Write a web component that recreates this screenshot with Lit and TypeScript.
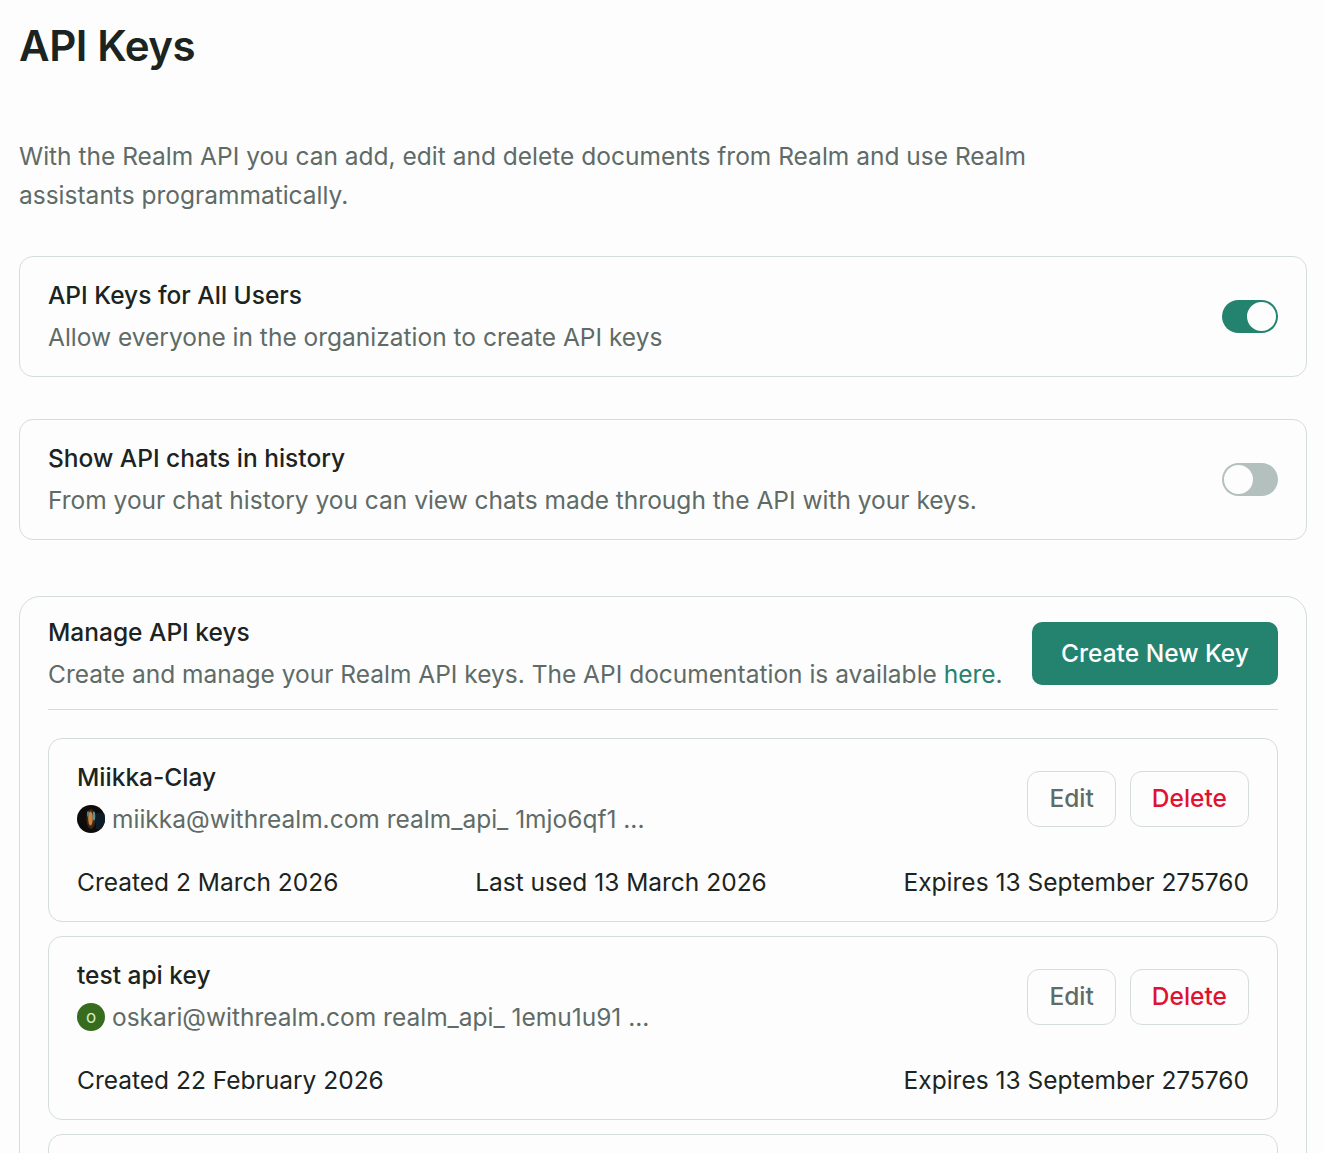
import { LitElement, html, css } from "lit";
import { customElement } from "lit/decorators.js";

interface ApiKey {
  name: string;
  email: string;
  token: string;
  avatar: "photo" | "letter";
  dates: string[];
}

const KEYS: ApiKey[] = [
  {
    name: "Miikka-Clay",
    email: "miikka@withrealm.com",
    token: "realm_api_ 1mjo6qf1 ...",
    avatar: "photo",
    dates: ["Created 2 March 2026", "Last used 13 March 2026", "Expires 13 September 275760"],
  },
  {
    name: "test api key",
    email: "oskari@withrealm.com",
    token: "realm_api_ 1emu1u91 ...",
    avatar: "letter",
    dates: ["Created 22 February 2026", "Expires 13 September 275760"],
  },
];

@customElement("app-root")
export class AppRoot extends LitElement {
  static styles = css`
    :host {
      display: block;
      box-sizing: border-box;
      height: 1153px;
      overflow: hidden;
      padding: 0 17px 0 19px;
      background: #fdfdfd;
      font-family: Inter, "Liberation Sans", sans-serif;
      font-size: 24.5px;
      line-height: 42px;
      color: #1b2421;
    }
    * { box-sizing: border-box; }
    h1 {
      margin: 0;
      padding-top: 21px;
      font-size: 42px;
      line-height: 50px;
      font-weight: 600;
      letter-spacing: -0.42px;
      color: #1b2421;
    }
    .intro {
      margin: 66px 0 0;
      max-width: 1050px;
      line-height: 39px;
      color: #5f6b67;
    }
    .card {
      border: 1px solid #d5dcdc;
      border-radius: 14px;
    }
    .setting {
      display: flex;
      align-items: center;
      justify-content: space-between;
      padding: 17px 28px 18px;
    }
    .first { margin-top: 41px; }
    .second { margin-top: 42px; }
    .title { font-weight: 500; color: #1b2421; }
    .muted { color: #5f6b67; }
    .switch {
      flex: none;
      display: flex;
      width: 56px;
      height: 33px;
      margin-top: 1px;
      padding: 2px;
      border-radius: 17px;
      background: #b4c0bd;
    }
    .switch.on {
      background: #24836f;
      justify-content: flex-end;
    }
    .knob {
      width: 29px;
      height: 29px;
      border-radius: 50%;
      background: #fdfdfd;
    }
    .manage {
      margin-top: 56px;
      padding: 14px 28px 0;
      border-radius: 21px;
    }
    .head {
      display: flex;
      align-items: center;
      justify-content: space-between;
      padding-bottom: 14px;
      border-bottom: 1px solid #d5dcdc;
      margin-bottom: 28px;
    }
    .link { color: #24836f; }
    .create {
      flex: none;
      width: 246px;
      height: 63px;
      border: none;
      border-radius: 10px;
      background: #24836f;
      color: #fdfdfd;
      font: 500 24.5px/42px Inter, "Liberation Sans", sans-serif;
    }
    .key {
      padding: 17px 28px 18px;
      margin-bottom: 14px;
    }
    .placeholder { height: 184px; }
    .key-top {
      display: flex;
      align-items: center;
      justify-content: space-between;
    }
    .owner {
      display: flex;
      align-items: center;
      gap: 7px;
    }
    .avatar {
      flex: none;
      display: block;
      width: 28px;
      height: 28px;
    }
    .actions {
      display: flex;
      gap: 14px;
      margin-top: 2px;
    }
    .action {
      height: 56px;
      padding: 0 21px 2px;
      border: 1px solid #d5dcdc;
      border-radius: 12px;
      background: transparent;
      color: #5f6b67;
      font: 500 24.5px/42px Inter, "Liberation Sans", sans-serif;
    }
    .danger { color: #e0122f; }
    .dates {
      display: flex;
      justify-content: space-between;
      margin-top: 21px;
    }
  `;

  private avatar(kind: ApiKey["avatar"]) {
    return kind === "photo"
      ? html`<svg class="avatar" viewBox="0 0 28 28">
          <defs>
            <filter id="soft" x="-30%" y="-30%" width="160%" height="160%"><feGaussianBlur stdDeviation="0.7"></feGaussianBlur></filter>
            <clipPath id="round"><circle cx="14" cy="14" r="14"></circle></clipPath>
          </defs>
          <g clip-path="url(#round)">
            <rect width="28" height="28" fill="#0e0c0b"></rect>
            <rect x="19" y="8" width="9" height="16" fill="#0c1a26" filter="url(#soft)"></rect>
            <ellipse cx="14" cy="14" rx="4.500" ry="10" fill="#3d2717" filter="url(#soft)"></ellipse>
            <ellipse cx="13.500" cy="13.500" rx="2.300" ry="7" fill="#c98443" filter="url(#soft)"></ellipse>
            <ellipse cx="17" cy="11" rx="1.300" ry="4.500" fill="#5f8f96" filter="url(#soft)"></ellipse>
            <ellipse cx="11" cy="9" rx="1.100" ry="3" fill="#5f7d70" filter="url(#soft)"></ellipse>
          </g>
        </svg>`
      : html`<svg class="avatar" viewBox="0 0 28 28">
          <circle cx="14" cy="14" r="14" fill="#376c1e"></circle>
          <text x="14" y="19.500" text-anchor="middle" font-size="17" font-family="Inter, sans-serif" fill="#d5ecc8">o</text>
        </svg>`;
  }

  render() {
    return html`
      <h1>API Keys</h1>
      <p class="intro">With the Realm API you can add, edit and delete documents from Realm and use Realm assistants programmatically.</p>

      <section class="card setting first">
        <div>
          <div class="title">API Keys for All Users</div>
          <div class="muted">Allow everyone in the organization to create API keys</div>
        </div>
        <div class="switch on"><div class="knob"></div></div>
      </section>

      <section class="card setting second">
        <div>
          <div class="title">Show API chats in history</div>
          <div class="muted">From your chat history you can view chats made through the API with your keys.</div>
        </div>
        <div class="switch"><div class="knob"></div></div>
      </section>

      <section class="card manage">
        <div class="head">
          <div>
            <div class="title">Manage API keys</div>
            <div class="muted">Create and manage your Realm API keys. The API documentation is available <span class="link">here</span>.</div>
          </div>
          <button class="create">Create New Key</button>
        </div>
        ${KEYS.map(
          (k) => html`
            <article class="card key">
              <div class="key-top">
                <div>
                  <div class="title">${k.name}</div>
                  <div class="owner muted">${this.avatar(k.avatar)}<span>${k.email} ${k.token}</span></div>
                </div>
                <div class="actions">
                  <button class="action">Edit</button>
                  <button class="action danger">Delete</button>
                </div>
              </div>
              <div class="dates">${k.dates.map((d) => html`<span>${d}</span>`)}</div>
            </article>
          `
        )}
        <div class="card placeholder"></div>
      </section>
    `;
  }
}
